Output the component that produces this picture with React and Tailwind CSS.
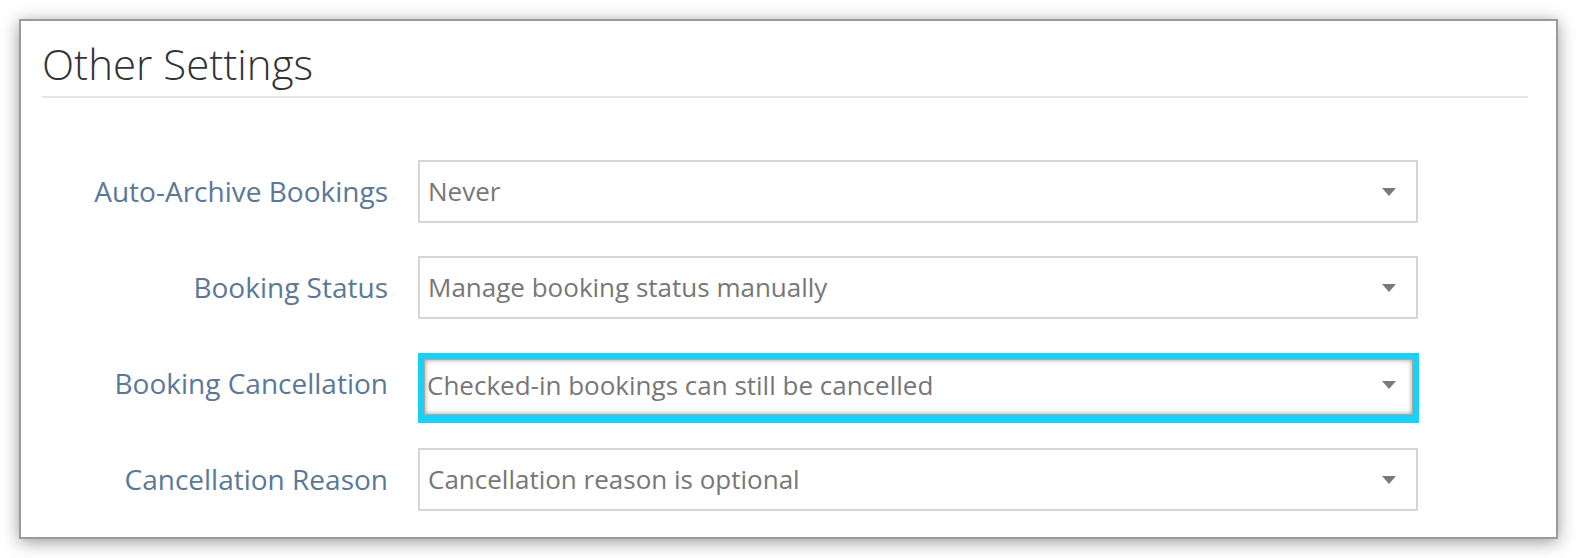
import { useState } from "react";

const rows = [
  { label: "Auto-Archive Bookings", value: "Never" },
  { label: "Booking Status", value: "Manage booking status manually" },
  { label: "Booking Cancellation", value: "Checked-in bookings can still be cancelled", focus: true },
  { label: "Cancellation Reason", value: "Cancellation reason is optional" },
];

function Caret() {
  return (
    <svg width="14" height="8" viewBox="0 0 14 8" className="shrink-0">
      <path d="M0 0 H14 L7 8 Z" fill="#7a7a7a" />
    </svg>
  );
}

function SelectBox({ value, focus }) {
  if (focus) {
    return (
      <div className="mt-px h-[70px] w-[1001px] border-x-[6px] border-t-[6px] border-b-[8px] border-[#17d1f7]">
        <div className="flex h-full items-center justify-between border border-[#a9a9a9] pb-[4px] pl-[2px] pr-[16px] shadow-[inset_0_0_5px_rgba(0,0,0,0.4)]">
          <span className="text-[26px] text-[#777]">{value}</span>
          <Caret />
        </div>
      </div>
    );
  }
  return (
    <div className="flex h-[63px] w-[1000px] items-center justify-between border-2 border-[#d6d6d6] bg-white pl-[8px] pr-[20px]">
      <span className="text-[26px] text-[#777]">{value}</span>
      <Caret />
    </div>
  );
}

export default function App() {
  const [open] = useState(false);
  return (
    <div className="h-[558px] w-[1576px] bg-white pl-[19px] pt-[19px]" style={{ fontFamily: '"Open Sans", sans-serif' }}>
      <div className="h-[520px] w-[1539px] border-2 border-[#9a9a9a] bg-white pl-[21px] pr-[28px] pt-[22px] shadow-[0_3px_16px_rgba(0,0,0,0.4)]">
        <h2 className="text-[42px] font-light leading-none text-[#333]">Other Settings</h2>
        <div className="mt-[11px] h-[2px] bg-[#e6e6e6]" />
        <div className="mt-[62px] flex flex-col gap-[33px]">
          {rows.map((r) => (
            <div key={r.label} className="flex h-[63px] items-start">
              <div className="flex h-[62px] w-[346px] items-center justify-end text-[28px] text-[#5b7898]">
                {r.label}
              </div>
              <div className="ml-[30px]">
                <SelectBox value={r.value} focus={r.focus && !open} />
              </div>
            </div>
          ))}
        </div>
      </div>
    </div>
  );
}
